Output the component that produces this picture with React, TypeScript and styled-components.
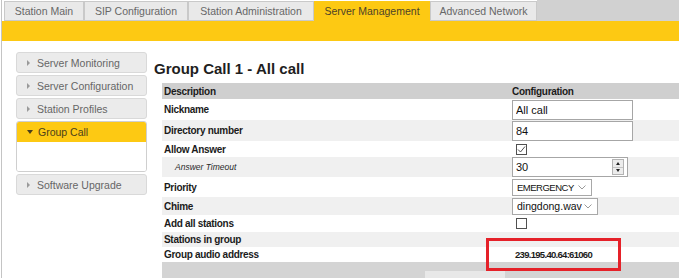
import React from 'react';
import styled, { createGlobalStyle } from 'styled-components';

const YELLOW = '#fdc913';

const GlobalStyle = createGlobalStyle`
  html, body {
    margin: 0;
    padding: 0;
    background: #fff;
  }
  body {
    font-family: "Liberation Sans", Arial, sans-serif;
    overflow: hidden;
  }
`;

const Page = styled.div`
  box-sizing: border-box;
  width: 678px;
  height: 278px;
  margin-left: 1px;
  border-left: 1px solid #c4c4c4;
  overflow: hidden;
`;

const TabBar = styled.div`
  display: flex;
  height: 21px;
  padding-left: 2px;
`;

const Tab = styled.div<{ $w: number; $active?: boolean }>`
  box-sizing: border-box;
  width: ${p => p.$w}px;
  height: 20px;
  margin-top: 1px;
  border: 1px solid ${p => (p.$active ? YELLOW : '#c9c9c9')};
  background: ${p => (p.$active ? YELLOW : '#e9e9e9')};
  color: ${p => (p.$active ? '#4d4327' : '#676767')};
  font-size: 10.5px;
  line-height: 18px;
  text-align: center;
  white-space: nowrap;
`;

const TabFiller = styled.div`
  flex: 1;
  background: #d1d1d1;
`;

const Band = styled.div`
  height: 20px;
  background: ${YELLOW};
`;

const Body = styled.div`
  display: flex;
  align-items: flex-start;
`;

const Sidebar = styled.div`
  flex-shrink: 0;
  width: 131px;
  margin: 11px 0 0 14px;
`;

const NavItem = styled.div`
  box-sizing: border-box;
  height: 21px;
  margin-bottom: 2px;
  display: flex;
  align-items: center;
  padding-left: 10px;
  border: 1px solid #d9d9d9;
  border-radius: 3px;
  background: #ebebeb;
  color: #666;
  font-size: 10.5px;
  white-space: nowrap;
`;

const NavGroup = styled.div`
  margin-bottom: 2px;
  border: 1px solid #cfcfcf;
  border-radius: 3px;
  overflow: hidden;
`;

const NavGroupHead = styled.div`
  height: 20px;
  display: flex;
  align-items: center;
  padding-left: 10px;
  background: ${YELLOW};
  color: #4a3f1c;
  font-size: 10.5px;
`;

const NavGroupBody = styled.div`
  height: 29px;
  background: #fff;
`;

const Arrow = styled.span<{ $down?: boolean }>`
  width: 0;
  height: 0;
  margin-right: ${p => (p.$down ? 5 : 7)}px;
  ${p =>
    p.$down
      ? `border-top: 4px solid #4a3f1c; border-left: 3px solid transparent; border-right: 3px solid transparent;`
      : `border-left: 3px solid #9a9a9a; border-top: 3px solid transparent; border-bottom: 3px solid transparent;`}
`;

const Main = styled.div`
  flex: 1;
  min-width: 0;
  margin: 19px 0 0 7px;
`;

const Title = styled.h1`
  margin: 0 0 6px 0;
  font-size: 15px;
  line-height: 17px;
  font-weight: bold;
  color: #1e1e1e;
  white-space: nowrap;
`;

const Table = styled.div`
  margin-left: 8px;
  width: 600px;
`;

const Row = styled.div<{ $h: number; $bg: string }>`
  position: relative;
  display: grid;
  grid-template-columns: 348px 1fr;
  align-items: center;
  height: ${p => p.$h}px;
  background: ${p => p.$bg};
`;

const Label = styled.div`
  padding-left: 2px;
  font-weight: bold;
  font-size: 10px;
  letter-spacing: -0.3px;
  color: #1b1b1b;
  white-space: nowrap;
`;

const SubLabel = styled.div`
  padding-left: 13px;
  font-style: italic;
  font-size: 8.5px;
  color: #2a2a2a;
  white-space: nowrap;
`;

const Value = styled.div`
  position: relative;
  display: flex;
  align-items: center;
  padding-left: 2px;
  height: 100%;
`;

const TextBox = styled.input<{ $w: number }>`
  box-sizing: border-box;
  width: ${p => p.$w}px;
  height: 20px;
  margin: 0;
  padding: 0 3px;
  border: 1px solid #a6a6a6;
  outline: none;
  font-family: "Liberation Sans", Arial, sans-serif;
  font-size: 11px;
  color: #111;
`;

const NumberField = styled.div`
  box-sizing: border-box;
  width: 116px;
  height: 20px;
  display: flex;
  align-items: center;
  justify-content: space-between;
  padding: 0 3px;
  border: 1px solid #a6a6a6;
  background: #fff;
  font-size: 11px;
  color: #111;
`;

const Spin = styled.div`
  box-sizing: border-box;
  width: 12px;
  height: 16px;
  display: flex;
  flex-direction: column;
  border: 1px solid #b3b3b3;
  background: #ececec;
`;

const SpinHalf = styled.div<{ $down?: boolean }>`
  flex: 1;
  display: flex;
  align-items: center;
  justify-content: center;
  ${p => (p.$down ? '' : 'border-bottom: 1px solid #c4c4c4;')}
`;

const SpinArrow = styled.span<{ $down?: boolean }>`
  width: 0;
  height: 0;
  border-left: 2.5px solid transparent;
  border-right: 2.5px solid transparent;
  ${p => (p.$down ? 'border-top: 3px solid #222;' : 'border-bottom: 3px solid #222;')}
`;

const SelectBox = styled.div<{ $w: number }>`
  box-sizing: border-box;
  width: ${p => p.$w}px;
  height: 17px;
  display: flex;
  align-items: center;
  justify-content: space-between;
  padding: 0 5px 0 4px;
  border: 1px solid #a8a8a8;
  background: #fff;
  font-size: 10.5px;
  color: #111;
  white-space: nowrap;
`;

const Caps = styled.span`
  font-size: 9.5px;
  letter-spacing: -0.5px;
`;

const Check = styled.span`
  box-sizing: border-box;
  display: flex;
  align-items: center;
  justify-content: center;
  width: 11px;
  height: 11px;
  margin-left: 4px;
  border: 1px solid #505050;
  background: #fff;
`;

const Address = styled.div`
  padding-left: 3px;
  font-weight: bold;
  font-size: 9.5px;
  letter-spacing: -0.7px;
  color: #1b1b1b;
`;

const Callout = styled.div`
  position: absolute;
  left: -24px;
  top: -9px;
  box-sizing: border-box;
  width: 135px;
  height: 33px;
  border: 3px solid #e52129;
  pointer-events: none;
`;

const FooterBar = styled.div`
  height: 20px;
  padding: 9px 0 0 263px;
  background: #d4d4d4;
`;

const FooterButton = styled.div`
  width: 80px;
  height: 12px;
  background: #e8e8e8;
`;

const Chevron = () => (
  <svg width="8" height="5" viewBox="0 0 8 5">
    <path d="M0.5 0.5 L4 4 L7.5 0.5" fill="none" stroke="#9a9a9a" strokeWidth="1" />
  </svg>
);

const tabs = [
  { label: 'Station Main', w: 80 },
  { label: 'SIP Configuration', w: 104 },
  { label: 'Station Administration', w: 126 },
  { label: 'Server Management', w: 116, active: true },
  { label: 'Advanced Network', w: 107 },
];

const App = () => {
  return (
    <Page>
      <GlobalStyle />
      <TabBar>
        {tabs.map(t => (
          <Tab key={t.label} $w={t.w} $active={t.active}>
            {t.label}
          </Tab>
        ))}
        <TabFiller />
      </TabBar>
      <Band />
      <Body>
        <Sidebar>
          <NavItem><Arrow />Server Monitoring</NavItem>
          <NavItem><Arrow />Server Configuration</NavItem>
          <NavItem><Arrow />Station Profiles</NavItem>
          <NavGroup>
            <NavGroupHead><Arrow $down />Group Call</NavGroupHead>
            <NavGroupBody />
          </NavGroup>
          <NavItem><Arrow />Software Upgrade</NavItem>
        </Sidebar>

        <Main>
          <Title>Group Call 1 - All call</Title>
          <Table>
            <Row $h={16} $bg="#cfcfcf">
              <Label>Description</Label>
              <Label>Configuration</Label>
            </Row>
            <Row $h={21} $bg="#fff">
              <Label>Nickname</Label>
              <Value><TextBox $w={121} readOnly value="All call" /></Value>
            </Row>
            <Row $h={21} $bg="#f0f0f0">
              <Label>Directory number</Label>
              <Value><TextBox $w={121} readOnly value="84" /></Value>
            </Row>
            <Row $h={16} $bg="#fff">
              <Label>Allow Answer</Label>
              <Value>
                <Check>
                  <svg width="9" height="9" viewBox="0 0 9 9">
                    <path d="M1 4.5 L3.5 7 L8 1.5" fill="none" stroke="#3c3c3c" strokeWidth="0.9" />
                  </svg>
                </Check>
              </Value>
            </Row>
            <Row $h={20} $bg="#f0f0f0">
              <SubLabel>Answer Timeout</SubLabel>
              <Value>
                <NumberField>
                  30
                  <Spin>
                    <SpinHalf><SpinArrow /></SpinHalf>
                    <SpinHalf $down><SpinArrow $down /></SpinHalf>
                  </Spin>
                </NumberField>
              </Value>
            </Row>
            <Row $h={20} $bg="#fff">
              <Label>Priority</Label>
              <Value><SelectBox $w={80}><Caps>EMERGENCY</Caps><Chevron /></SelectBox></Value>
            </Row>
            <Row $h={18} $bg="#f0f0f0">
              <Label>Chime</Label>
              <Value><SelectBox $w={86}>dingdong.wav<Chevron /></SelectBox></Value>
            </Row>
            <Row $h={17} $bg="#fff">
              <Label>Add all stations</Label>
              <Value><Check /></Value>
            </Row>
            <Row $h={15} $bg="#f0f0f0">
              <Label>Stations in group</Label>
              <Value />
            </Row>
            <Row $h={15} $bg="#fff">
              <Label>Group audio address</Label>
              <Value>
                <Address>239.195.40.64:61060</Address>
                <Callout />
              </Value>
            </Row>
            <FooterBar>
              <FooterButton />
            </FooterBar>
          </Table>
        </Main>
      </Body>
    </Page>
  );
};

export default App;
